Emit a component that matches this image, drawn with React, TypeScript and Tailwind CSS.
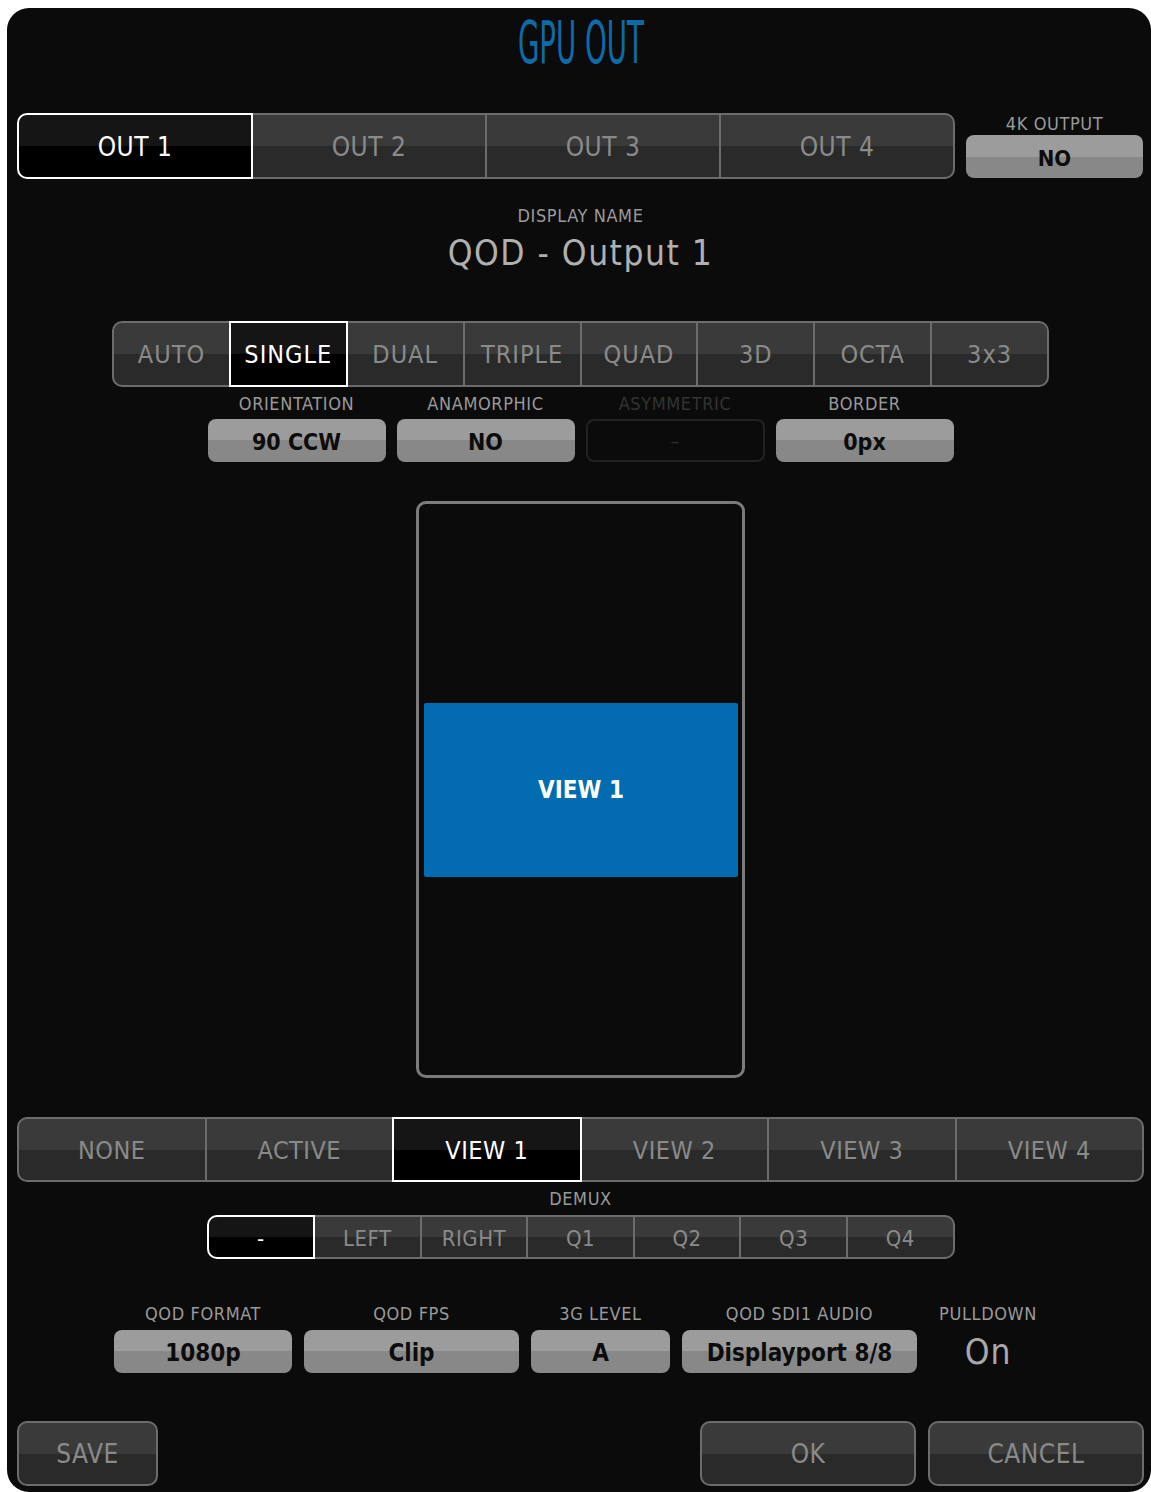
import React from 'react';

const font = "font-['Liberation_Sans_Narrow','DejaVu_Sans_Condensed',sans-serif]";

const segOff = 'bg-[linear-gradient(#3a3a3a_50%,#2a2a2a_50%)] border-[#6c6c6c] text-[#8a8a8a]';
const segOn = 'bg-[linear-gradient(#151515_50%,#000_50%)] border-white text-white z-10';

type SegProps = {
  items: string[];
  selected: number;
  height: string;
  text: string;
  className?: string;
};

const Segmented: React.FC<SegProps> = ({ items, selected, height, text, className = '' }) => (
  <div className={`flex ${height} ${className}`}>
    {items.map((label, i) => (
      <div
        key={label}
        className={`relative flex flex-1 items-center justify-center border-2 pt-[2px] ${text} ${
          i === selected ? segOn : segOff
        } ${i > 0 ? '-ml-[2px]' : ''} ${i === 0 ? 'rounded-l-[10px]' : ''} ${
          i === items.length - 1 ? 'rounded-r-[10px]' : ''
        }`}
      >
        {label}
      </div>
    ))}
  </div>
);

const Label: React.FC<{ children: React.ReactNode; dim?: boolean }> = ({ children, dim }) => (
  <div
    className={`pt-[1px] text-center text-[18px] leading-[20px] tracking-[0.6px] ${dim ? 'text-[#333]' : 'text-[#9a9a9a]'}`}
  >
    {children}
  </div>
);

const LightButton: React.FC<{ children: React.ReactNode; className?: string; text?: string }> = ({
  children,
  className = '',
  text = 'text-[23px]',
}) => (
  <div
    className={`flex h-[43px] items-center justify-center rounded-[8px] bg-[linear-gradient(#9c9c9c_50%,#888_50%)] pt-[3px] font-bold text-[#0c0c0c] ${text} ${className}`}
  >
    {children}
  </div>
);

const Field: React.FC<{ label: string; value: string; width: string }> = ({ label, value, width }) => (
  <div className={width}>
    <Label>{label}</Label>
    <LightButton className="mt-[6px]" text="text-[24px]">
      {value}
    </LightButton>
  </div>
);

const FooterButton: React.FC<{ label: string; width: string }> = ({ label, width }) => (
  <div
    className={`flex h-[65px] items-center justify-center rounded-[10px] border-2 border-[#6c6c6c] bg-[linear-gradient(#3a3a3a_50%,#2a2a2a_50%)] pt-[2px] text-[26px] tracking-[0.5px] text-[#8a8a8a] ${width}`}
  >
    {label}
  </div>
);

export default function App() {
  return (
    <div className={`min-h-[1492px] bg-white pl-[7px] pt-[8px] ${font}`}>
      <div className="h-[1484px] w-[1144px] overflow-hidden rounded-[22px] bg-[#0b0b0b] pl-[10px] pr-[7px]">
        {/* header */}
        <div className="flex h-[105px] justify-center">
          <span className="mt-[3px] inline-block scale-x-[0.53] text-[58px] leading-[64px] text-[#0f6aa8]">
            GPU OUT
          </span>
        </div>

        {/* output tabs + 4K */}
        <div className="flex gap-[11px]">
          <Segmented
            items={['OUT 1', 'OUT 2', 'OUT 3', 'OUT 4']}
            selected={0}
            height="h-[66px]"
            text="text-[26px] tracking-[0.5px]"
            className="w-[938px]"
          />
          <div className="w-[177px]">
            <Label>4K OUTPUT</Label>
            <LightButton className="mt-[1px]" text="text-[22px]">
              NO
            </LightButton>
          </div>
        </div>

        {/* display name */}
        <div className="mt-[26px]">
          <Label>DISPLAY NAME</Label>
          <div className="mt-[7px] text-center text-[35px] leading-[40px] tracking-[1.5px] text-[#b0b0b0]">
            QOD - Output 1
          </div>
        </div>

        {/* layout mode */}
        <Segmented
          items={['AUTO', 'SINGLE', 'DUAL', 'TRIPLE', 'QUAD', '3D', 'OCTA', '3x3']}
          selected={1}
          height="h-[66px]"
          text="text-[25px] tracking-[1px]"
          className="mx-auto mt-[48px] w-[937px]"
        />

        <div className="mt-[6px] flex justify-center gap-[11px]">
          <div className="w-[178px]">
            <Label>ORIENTATION</Label>
            <LightButton className="mt-[5px]">90 CCW</LightButton>
          </div>
          <div className="w-[178px]">
            <Label>ANAMORPHIC</Label>
            <LightButton className="mt-[5px]">NO</LightButton>
          </div>
          <div className="w-[179px]">
            <Label dim>ASYMMETRIC</Label>
            <div className="mt-[5px] flex h-[43px] items-center justify-center rounded-[8px] border-2 border-[#222] text-[20px] text-[#2e2e2e]">
              –
            </div>
          </div>
          <div className="w-[178px]">
            <Label>BORDER</Label>
            <LightButton className="mt-[5px]">0px</LightButton>
          </div>
        </div>

        {/* output preview */}
        <div className="mx-auto mt-[39px] flex h-[577px] w-[329px] items-center rounded-[10px] border-[3px] border-[#7b7b7b] pl-[5px] pr-[4px]">
          <div className="flex h-[174px] w-full items-center justify-center rounded-[2px] bg-[#036cb0] text-[24px] font-bold text-white">
            VIEW 1
          </div>
        </div>

        {/* view selection */}
        <Segmented
          items={['NONE', 'ACTIVE', 'VIEW 1', 'VIEW 2', 'VIEW 3', 'VIEW 4']}
          selected={2}
          height="h-[65px]"
          text="text-[25px] tracking-[0.5px]"
          className="mt-[39px]"
        />

        <div className="mt-[6px]">
          <Label>DEMUX</Label>
        </div>
        <Segmented
          items={['-', 'LEFT', 'RIGHT', 'Q1', 'Q2', 'Q3', 'Q4']}
          selected={0}
          height="h-[44px]"
          text="text-[22px] tracking-[0.5px]"
          className="mx-auto mt-[6px] w-[748px]"
        />

        {/* format settings */}
        <div className="mt-[44px] flex justify-center gap-[12px]">
          <Field label="QOD FORMAT" value="1080p" width="w-[178px]" />
          <Field label="QOD FPS" value="Clip" width="w-[215px]" />
          <Field label="3G LEVEL" value="A" width="w-[139px]" />
          <Field label="QOD SDI1 AUDIO" value="Displayport 8/8" width="w-[235px]" />
          <div className="w-[118px]">
            <Label>PULLDOWN</Label>
            <div className="mt-[8px] text-center text-[35px] leading-[40px] tracking-[1px] text-[#a8a8a8]">On</div>
          </div>
        </div>

        {/* footer */}
        <div className="mt-[48px] flex gap-[12px]">
          <FooterButton label="SAVE" width="w-[141px]" />
          <div className="flex-1" />
          <FooterButton label="OK" width="w-[216px]" />
          <FooterButton label="CANCEL" width="w-[216px]" />
        </div>
      </div>
    </div>
  );
}
